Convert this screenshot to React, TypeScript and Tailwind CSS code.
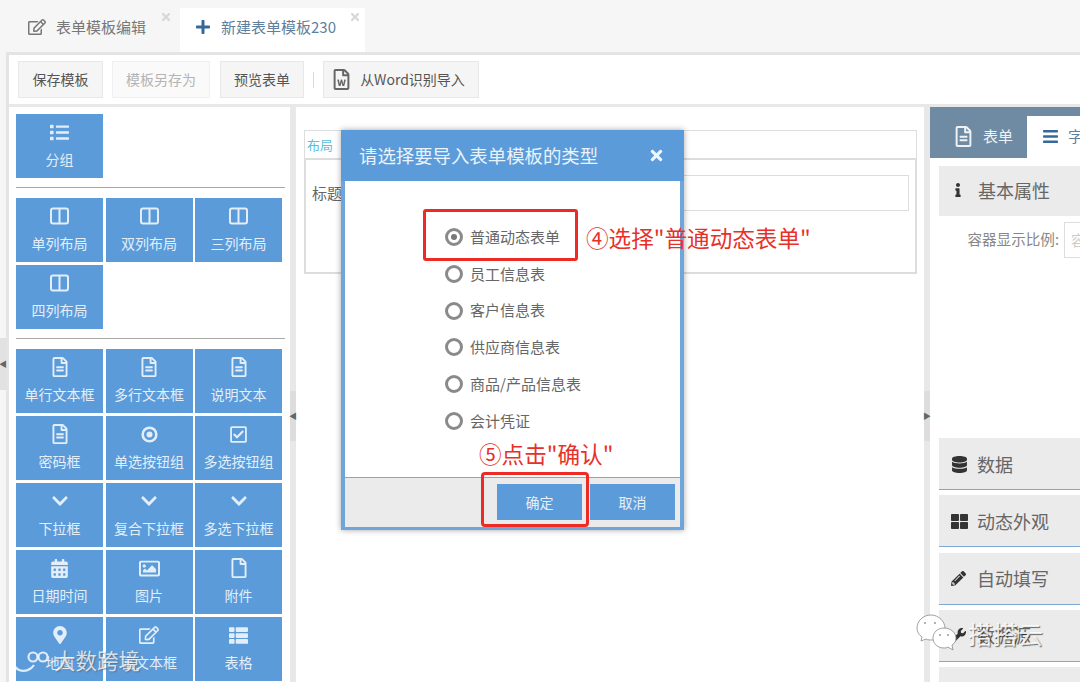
import type { ReactNode } from "react";
import {
  FaBars,
  FaCalendarAlt,
  FaChevronDown,
  FaDatabase,
  FaInfo,
  FaList,
  FaMapMarkerAlt,
  FaPencilAlt,
  FaPlus,
  FaRegCheckSquare,
  FaRegEdit,
  FaRegFile,
  FaRegFileAlt,
  FaRegFileWord,
  FaRegImage,
  FaThLarge,
  FaThList,
  FaTimes,
  FaWrench,
} from "react-icons/fa";

const font = "font-['Noto_Sans_CJK_SC','Liberation_Sans',sans-serif]";

function Columns() {
  return (
    <svg width="19" height="18" viewBox="0 0 19 18" fill="none" stroke="currentColor" strokeWidth="2">
      <rect x="1" y="1.5" width="17" height="15" rx="2" />
      <path d="M9.5 1.5v15" />
    </svg>
  );
}

function Ring() {
  return (
    <svg width="17" height="17" viewBox="0 0 17 17" fill="none" stroke="currentColor">
      <circle cx="8.5" cy="8.5" r="6.8" strokeWidth="2.6" />
      <circle cx="8.5" cy="8.5" r="3" fill="currentColor" stroke="none" />
    </svg>
  );
}

const fileIcon = <FaRegFileAlt size={20} />;
const chevron = <FaChevronDown size={18} />;

type Tile = { icon: ReactNode; label: string };

const groups: Tile[][] = [
  [{ icon: <FaList size={19} />, label: "分组" }],
  [
    { icon: <Columns />, label: "单列布局" },
    { icon: <Columns />, label: "双列布局" },
    { icon: <Columns />, label: "三列布局" },
    { icon: <Columns />, label: "四列布局" },
  ],
  [
    { icon: fileIcon, label: "单行文本框" },
    { icon: fileIcon, label: "多行文本框" },
    { icon: fileIcon, label: "说明文本" },
    { icon: fileIcon, label: "密码框" },
    { icon: <Ring />, label: "单选按钮组" },
    { icon: <FaRegCheckSquare size={19} />, label: "多选按钮组" },
    { icon: chevron, label: "下拉框" },
    { icon: chevron, label: "复合下拉框" },
    { icon: chevron, label: "多选下拉框" },
    { icon: <FaCalendarAlt size={19} />, label: "日期时间" },
    { icon: <FaRegImage size={21} />, label: "图片" },
    { icon: <FaRegFile size={20} />, label: "附件" },
    { icon: <FaMapMarkerAlt size={18} />, label: "地图" },
    { icon: <FaRegEdit size={20} />, label: "富文本框" },
    { icon: <FaThList size={19} />, label: "表格" },
  ],
];

const radios = ["普通动态表单", "员工信息表", "客户信息表", "供应商信息表", "商品/产品信息表", "会计凭证"];

const lowerSections: { icon: ReactNode; label: string }[] = [
  { icon: <FaDatabase size={17} />, label: "数据" },
  { icon: <FaThLarge size={17} />, label: "动态外观" },
  { icon: <FaPencilAlt size={15} />, label: "自动填写" },
  { icon: <FaWrench size={15} />, label: "数据源" },
  { icon: null, label: "" },
];

function TileButton({ icon, label }: Tile) {
  return (
    <div className="h-[64px] bg-[#5b9bd9] text-[#e3eef9] flex flex-col items-center pt-[8px]">
      <div className="h-[20px] flex items-center justify-center">{icon}</div>
      <div className="mt-[7px] text-[14px] leading-[20px]">{label}</div>
    </div>
  );
}

function ToolButton({ children, disabled, w }: { children: ReactNode; disabled?: boolean; w: string }) {
  return (
    <div
      className={`h-[37px] flex items-center justify-center text-[14px] border ${w} ${
        disabled ? "bg-[#fafafa] border-[#f0f0f0] text-[#b4b4b4]" : "bg-[#f5f5f5] border-[#e8e8e8] text-[#555555]"
      }`}
    >
      {children}
    </div>
  );
}

function Section({ icon, label }: { icon: ReactNode; label: string }) {
  return (
    <div className="h-[52px] shrink-0 bg-[#ebebeb] border-b border-[#7da9d6] flex items-center pl-[12px] pt-[1px] text-[#666666] text-[18px]">
      <span className="w-[26px] text-[#333333] flex items-center">{icon}</span>
      {label}
    </div>
  );
}

export default function App() {
  return (
    <div className={`relative h-[682px] w-[1080px] overflow-hidden bg-[#f6f6f6] ${font}`}>
      {/* tab bar */}
      <div className="h-[52px] pl-[6px] flex items-end">
        <div className="relative w-[174px] h-[44px] flex items-center pl-[22px] pb-[6px] text-[15px] text-[#777777]">
          <FaRegEdit size={18} className="mr-[10px] text-[#777777]" />
          表单模板编辑
          <FaTimes size={12} className="absolute right-[8px] top-[3px] text-[#d8d8d8]" />
        </div>
        <div className="relative w-[185px] h-[44px] bg-white flex items-center pl-[15px] pb-[6px] text-[15px] text-[#5f7f9c]">
          <FaPlus size={16} className="mr-[10px] text-[#36699b]" />
          新建表单模板230
          <FaTimes size={12} className="absolute right-[4px] top-[3px] text-[#d8d8d8]" />
        </div>
      </div>

      {/* main frame */}
      <div className="ml-[6px] h-[630px] border-t-[3px] border-l-[3px] border-[#e4e4e4] bg-white flex flex-col">
        <div className="h-[52px] shrink-0 flex items-center pl-[9px] border-b-[3px] border-[#e8e8e8]">
          <ToolButton w="w-[85px]">保存模板</ToolButton>
          <div className="w-[9px]" />
          <ToolButton w="w-[98px]" disabled>
            模板另存为
          </ToolButton>
          <div className="w-[10px]" />
          <ToolButton w="w-[84px]">预览表单</ToolButton>
          <div className="w-px h-[16px] bg-[#d8d8d8] mx-[9px]" />
          <ToolButton w="w-[156px]">
            <span className="flex items-center pr-[6px]">
              <FaRegFileWord size={21} className="mr-[8px] text-[#666666]" />
              从Word识别导入
            </span>
          </ToolButton>
        </div>

        <div className="flex-1 flex min-h-0">
          {/* widget panel */}
          <div className="w-[281px] shrink-0 overflow-hidden pl-[7px] pt-[7px]">
            {groups.map((tiles, i) => (
              <div key={i} className={i > 0 ? "mt-[9px] pt-[10px] border-t border-[#a8a8a8] w-[269px]" : "w-[269px]"}>
                <div className="grid grid-cols-[87px_87px_87px] gap-x-[2.5px] gap-y-[3px]">
                  {tiles.map((t) => (
                    <TileButton key={t.label} icon={t.icon} label={t.label} />
                  ))}
                </div>
              </div>
            ))}
          </div>

          <div className="relative w-[6px] shrink-0 bg-[#e8e8e8]">
            <div className="absolute top-[284px] left-0 w-[6px] h-[50px] bg-[#dddddd] flex items-center justify-center text-[#666666] text-[8px]">
              ◀
            </div>
          </div>

          {/* form canvas */}
          <div className="w-[628px] shrink-0 pl-[8px] pr-[7px] pt-[23px]">
            <div className="h-[28px] border border-[#dddddd] border-b-0 pl-[2px] text-[13px] leading-[28px] text-[#5bc0de]">布局</div>
            <div className="h-[116px] border-2 border-[#dddddd] pt-[15px] pl-[6px] pr-[6px] flex text-[#666666] text-[15px]">
              <span className="w-[30px] leading-[35px]">标题</span>
              <div className="flex-1 h-[36px] border border-[#dddddd]" />
            </div>
          </div>

          <div className="relative w-[6px] shrink-0 bg-[#e8e8e8]">
            <div className="absolute top-[284px] left-0 w-[6px] h-[50px] bg-[#dddddd] flex items-center justify-center text-[#666666] text-[8px]">
              ▶
            </div>
          </div>

          {/* property panel */}
          <div className="flex-1 min-w-0 overflow-hidden">
            <div className="h-[51px] w-[200px] bg-[#6f8ba3] flex items-end">
              <div className="w-[97px] h-[42px] flex items-center pl-[23px] pb-[1px] text-[#eef2f6] text-[15px]">
                <FaRegFileAlt size={21} className="mr-[9px]" />
                表单
              </div>
              <div className="flex-1 h-[42px] bg-white flex items-center pl-[15px] pb-[1px] text-[15px] text-[#5f7f9c]">
                <FaBars size={17} className="mr-[9px] text-[#36699b]" />
                字段
              </div>
            </div>
            <div className="pl-[9px] pt-[8px] w-[200px]">
              <div className="h-[50px] bg-[#ebebeb] flex items-center pl-[12px] pb-[2px] text-[#666666] text-[18px]">
                <span className="w-[27px] text-[#333333] flex items-center">
                  <FaInfo size={14} />
                </span>
                基本属性
              </div>
              <div className="h-[222px] pt-[6px] flex items-start text-[14.6px] text-[#888888]">
                <span className="w-[120px] text-right leading-[34px]">容器显示比例:</span>
                <div className="ml-[5px] h-[36px] flex-1 border border-[#dddddd] text-[#cccccc] leading-[34px] pl-[6px]">容</div>
              </div>
              <div className="flex flex-col gap-[5.3px]">
                {lowerSections.map((s, i) => (
                  <Section key={i} icon={s.icon} label={s.label} />
                ))}
              </div>
            </div>
          </div>
        </div>
      </div>

      {/* left page handle */}
      <div className="absolute left-0 top-[338px] w-[6px] h-[52px] bg-[#e2e2e2] flex items-center justify-center text-[#666666] text-[8px]">◀</div>

      {/* dialog */}
      <div className="absolute left-[341px] top-[130px] w-[343px] h-[400px] border-x-[4px] border-b-[3px] border-[#6ea6db] bg-white shadow-[0_0_6px_rgba(0,0,0,0.35)] flex flex-col">
        <div className="-mx-[4px] h-[51px] shrink-0 bg-[#5b9bd9] flex items-center justify-between pl-[18px] pr-[19px] text-[18.4px] text-[#eaf3fb]">
          请选择要导入表单模板的类型
          <FaTimes size={17} className="text-[#eef5fb]" />
        </div>
        <div className="flex-1 pt-[38px] pl-[100px]">
          {radios.map((r, i) => (
            <div key={r} className="h-[36.7px] flex items-center text-[15px] text-[#666666]">
              <span className="w-[18px] h-[18px] rounded-full border-[3px] border-[#8a8a8a] flex items-center justify-center mr-[7px]">
                {i === 0 && <span className="w-[6px] h-[6px] rounded-full bg-[#777777]" />}
              </span>
              {r}
            </div>
          ))}
        </div>
        <div className="h-[50px] shrink-0 bg-[#ebebeb] border-t border-[#7da9d6] flex items-start justify-end gap-[8px] pt-[6px] pr-[5px] text-[14px] text-[#e6f0fa]">
          <div className="w-[85px] h-[36px] bg-[#5b9bd9] flex items-center justify-center">确定</div>
          <div className="w-[85px] h-[36px] bg-[#5b9bd9] flex items-center justify-center">取消</div>
        </div>
      </div>

      {/* red annotations */}
      <div className="absolute left-[423px] top-[209px] w-[155px] h-[52px] border-[3px] border-[#ee2a24] rounded-[3px]" />
      <div className="absolute left-[586px] top-[222px] text-[22.6px] leading-[32px] text-[#e8302a] whitespace-nowrap">④选择"普通动态表单"</div>
      <div className="absolute left-[479px] top-[438px] text-[22.6px] leading-[32px] text-[#e8302a] whitespace-nowrap">⑤点击"确认"</div>
      <div className="absolute left-[481px] top-[472px] w-[108px] h-[55px] border-[3px] border-[#ee2a24] rounded-[4px]" />

      {/* watermarks */}
      <div className="absolute left-[54px] top-[645px] text-[21.5px] leading-[30px] text-white/75 [text-shadow:1px_1px_1px_rgba(90,90,90,0.6)] whitespace-nowrap">大数跨境</div>
      <svg className="absolute left-[9px] top-[649px]" width="40" height="26" viewBox="0 0 40 26" fill="none" stroke="#ffffff" strokeOpacity="0.8" strokeWidth="2.2">
        <path d="M5 5c-2 6-1 13 5 16 6 2 12 0 15-5" />
        <circle cx="24" cy="8" r="4.5" />
        <circle cx="34" cy="8" r="4.5" />
      </svg>
      <svg className="absolute left-[916px] top-[614px]" width="42" height="38" viewBox="0 0 42 38" fill="#ffffff" stroke="#8a8a8a" strokeWidth="0.8">
        <path d="M15 1c-8 0-14 6-14 13 0 4 2 7 5 9l-1 4 5-2c2 1 4 1 6 1 8 0 13-6 13-12S23 1 15 1z" />
        <path d="M28 14c-7 0-11 5-11 10s4 10 11 10c1 0 3 0 4-1l5 3-1-5c3-2 4-4 4-7 0-5-5-10-12-10z" />
        <circle cx="9" cy="9" r="1" fill="#9a9a9a" stroke="none" />
        <circle cx="19" cy="9" r="1" fill="#9a9a9a" stroke="none" />
        <circle cx="24" cy="21" r="1" fill="#9a9a9a" stroke="none" />
        <circle cx="32" cy="21" r="1" fill="#9a9a9a" stroke="none" />
      </svg>
      <div className="absolute left-[968px] top-[617px] text-[25px] leading-[32px] text-white/85 [text-shadow:1px_1px_1px_rgba(0,0,0,0.55)] whitespace-nowrap">搭搭云</div>
    </div>
  );
}
